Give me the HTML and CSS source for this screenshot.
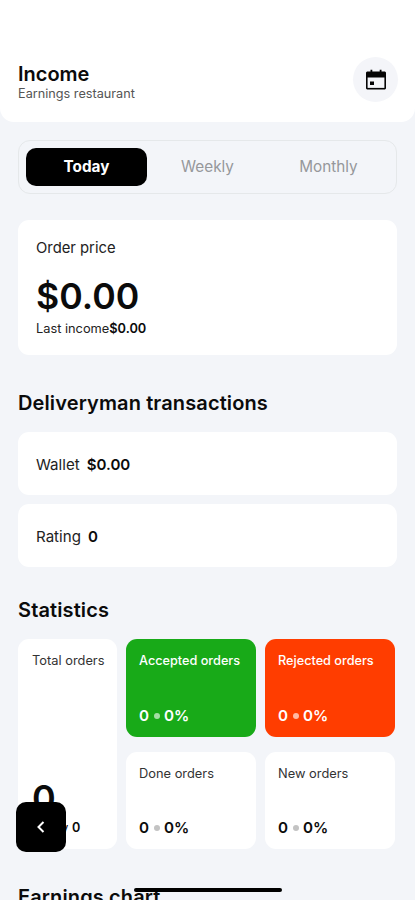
FILE: index.html
```html
<!DOCTYPE html>
<html lang="en">
<head>
<meta charset="utf-8">
<meta name="viewport" content="width=device-width, initial-scale=1">
<title>Income</title>
<link rel="stylesheet" href="styles.css">
</head>
<body>
<div class="screen">
  <header class="header">
    <div>
      <h1 class="title">Income</h1>
      <p class="subtitle">Earnings restaurant</p>
    </div>
    <button class="calendar" aria-label="Pick a date">
      <svg width="22" height="22" viewBox="0 0 22 22">
        <path d="M5.500.8h1.800v1.700h7.400V.8h1.800v1.700h3.500l1 1V19.500l-1 1H2l-1-1V3.500l1-1h3.500z" fill="#050505"/>
        <path d="M2.600 8.500h16.800v10.400H2.600z" fill="#f4f5f9"/>
        <rect x="5" y="12.500" width="4" height="3.500" fill="#050505"/>
      </svg>
    </button>
  </header>
  <main class="content">
    <nav class="tabs">
      <button class="tab tab-active">Today</button>
      <button class="tab">Weekly</button>
      <button class="tab">Monthly</button>
    </nav>
    <section class="card price">
      <p class="price-label">Order price</p>
      <p class="price-value">$0.00</p>
      <p class="price-last">Last income<b>$0.00</b></p>
    </section>
    <h2 class="heading heading-delivery">Deliveryman transactions</h2>
    <section class="card row"><span>Wallet</span><b>$0.00</b></section>
    <section class="card row"><span>Rating</span><b>0</b></section>
    <h2 class="heading heading-stats">Statistics</h2>
    <section class="stats">
      <div class="stat total">
        <p class="stat-label">Total orders</p>
        <div>
          <p class="total-value">0</p>
          <p class="total-today">Today <b>0</b></p>
        </div>
      </div>
      <div class="stat accepted"><p class="stat-label">Accepted orders</p><p class="stat-value">0<i class="dot"></i>0%</p></div>
      <div class="stat rejected"><p class="stat-label">Rejected orders</p><p class="stat-value">0<i class="dot"></i>0%</p></div>
      <div class="stat"><p class="stat-label">Done orders</p><p class="stat-value">0<i class="dot"></i>0%</p></div>
      <div class="stat"><p class="stat-label">New orders</p><p class="stat-value">0<i class="dot"></i>0%</p></div>
    </section>
    <h2 class="heading heading-chart">Earnings chart</h2>
  </main>
  <button class="back" aria-label="Back">
    <svg width="12" height="14" viewBox="0 0 12 14"><path d="M8.500 2 3.500 7l5 5" fill="none" stroke="#fff" stroke-width="2"/></svg>
  </button>
  <div class="home-bar"></div>
</div>
</body>
</html>
```
FILE: styles.css
```css
* { box-sizing: border-box; margin: 0; padding: 0; }
body { background: #f3f5f9; font-family: Inter, "Liberation Sans", sans-serif; color: #0b0b0b; }
button { border: 0; background: none; font: inherit; }
b { font-weight: 600; }

.screen { position: relative; height: 900px; overflow: hidden; }

.header {
  display: flex; justify-content: space-between; align-items: flex-start;
  height: 122px; padding: 57px 17px 0 18px;
  background: #fff; border-radius: 0 0 14px 14px;
}
.title { margin-top: 5px; font-size: 20px; line-height: 24px; font-weight: 600; }
.subtitle { font-size: 12.700px; line-height: 15px; color: #555; }
.calendar {
  display: flex; align-items: center; justify-content: center;
  width: 45px; height: 45px; border-radius: 50%; background: #f4f5f9;
}

.content { padding: 18px 18px 0; }
.tabs {
  display: grid; grid-template-columns: repeat(3, 1fr);
  height: 54px; padding: 7px 7px;
  border: 1px solid #e5e8ea; border-radius: 12px;
}
.tab { border-radius: 10px; font-size: 15.300px; line-height: 20px; color: #96989b; }
.tab-active { background: #000; color: #fff; font-weight: 700; }

.card { background: #fff; border-radius: 11px; padding: 0 18px; }
.price { height: 135px; margin-top: 26px; padding-top: 18px; }
.price-label { font-size: 14.800px; line-height: 20px; color: #222; }
.price-value { margin-top: 16px; font-size: 35.700px; line-height: 44px; font-weight: 600; }
.price-last { margin-top: 2px; font-size: 12.800px; line-height: 17px; color: #222; }
.price-last b { color: #0b0b0b; }

.heading { font-size: 20px; line-height: 24px; font-weight: 600; letter-spacing: .12px; }
.heading-delivery { margin: 36px 0 17px; }
.row { display: flex; align-items: center; gap: 7px; height: 63px; padding-top: 1px; font-size: 15.100px; color: #222; }
.row b { color: #0b0b0b; }
.row + .row { margin-top: 9px; }
.heading-stats { margin: 31px 0 17px; }

.stats {
  display: grid; grid-template-columns: 99px 130px 130px;
  grid-template-rows: 98px 97px; column-gap: 9px; row-gap: 15px;
}
.stat {
  display: flex; flex-direction: column; justify-content: space-between;
  padding: 13px 13px 11px; border-radius: 11px; background: #fff; white-space: nowrap;
}
.total { grid-row: 1 / 3; padding-left: 14px; }
.stat-label { font-size: 12.850px; line-height: 17px; color: #333; }
.stat-value { display: flex; align-items: center; font-size: 15.200px; line-height: 20px; font-weight: 600; }
.dot { width: 6px; height: 6px; margin: 0 4.500px; border-radius: 50%; background: #c3c3c3; }
.accepted { background: #18aa18; color: #fff; }
.rejected { background: #ff3d00; color: #fff; }
.accepted .stat-label, .rejected .stat-label { color: #fff; font-weight: 500; font-size: 12.700px; }
.accepted .dot { background: #a5dea5; }
.rejected .dot { background: #ffb9a3; }
.total-value { font-size: 36px; line-height: 40px; font-weight: 600; }
.total-today { font-size: 12.600px; line-height: 20px; }
.heading-chart { margin-top: 36px; }

.back {
  position: absolute; left: 16px; top: 802px; width: 50px; height: 50px;
  display: flex; align-items: center; justify-content: center;
  border-radius: 10px; background: #000;
}
.home-bar {
  position: absolute; left: 134px; top: 888px; width: 148px; height: 4px;
  border-radius: 2px; background: #000;
}
```
